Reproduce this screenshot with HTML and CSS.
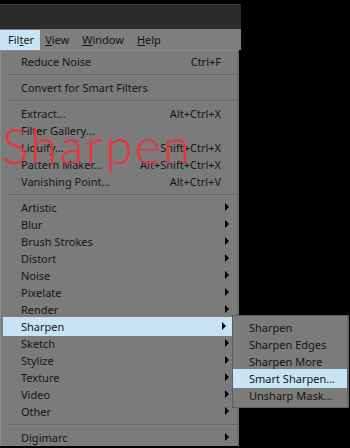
FILE: index.html
```html
<!DOCTYPE html>
<html lang="en">
<head>
    <meta charset="UTF-8">
    <title>Filter menu</title>
    <link rel="stylesheet" href="styles.css">
</head>
<body>
    <div class="app">
        <div class="titlebar"></div>
        <div class="menubar">
            <span class="top active">Fil<u>t</u>er</span>
            <span class="top"><u>V</u>iew</span>
            <span class="top"><u>W</u>indow</span>
            <span class="top"><u>H</u>elp</span>
        </div>
        <ul class="menu">
            <li><span>Reduce Noise</span><em>Ctrl+F</em></li>
            <li class="sep"></li>
            <li><span>Convert for Smart Filters</span></li>
            <li class="sep"></li>
            <li><span>Extract...</span><em>Alt+Ctrl+X</em></li>
            <li><span>Filter Gallery...</span></li>
            <li><span>Liquify...</span><em>Shift+Ctrl+X</em></li>
            <li><span>Pattern Maker...</span><em>Alt+Shift+Ctrl+X</em></li>
            <li><span>Vanishing Point...</span><em>Alt+Ctrl+V</em></li>
            <li class="sep"></li>
            <li class="sub"><span>Artistic</span></li>
            <li class="sub"><span>Blur</span></li>
            <li class="sub"><span>Brush Strokes</span></li>
            <li class="sub"><span>Distort</span></li>
            <li class="sub"><span>Noise</span></li>
            <li class="sub"><span>Pixelate</span></li>
            <li class="sub"><span>Render</span></li>
            <li class="sub hover"><span>Sharpen</span>
                <ul class="submenu">
                    <li><span>Sharpen</span></li>
                    <li><span>Sharpen Edges</span></li>
                    <li><span>Sharpen More</span></li>
                    <li class="hover"><span>Smart Sharpen...</span></li>
                    <li><span>Unsharp Mask...</span></li>
                </ul>
            </li>
            <li class="sub"><span>Sketch</span></li>
            <li class="sub"><span>Stylize</span></li>
            <li class="sub"><span>Texture</span></li>
            <li class="sub"><span>Video</span></li>
            <li class="sub"><span>Other</span></li>
            <li class="sep"></li>
            <li class="sub"><span>Digimarc</span></li>
        </ul>
    </div>
    <div class="label">Sharpen</div>
</body>
</html>
```

FILE: styles.css
```css
body,ul,li{
    margin: 0;
    padding: 0;
    list-style: none;
}
body{
    position: relative;
    width: 350px;
    height: 448px;
    overflow: hidden;
    background: #000;
    font-family: "Noto Sans", "Open Sans", sans-serif;
    font-size: 11px;
    color: #151515;
}
.app{
    width: 241px;
    padding-top: 4px;
}
.titlebar{
    height: 24px;
    background: #2c2c2c;
    border-top: 1px solid #3c3c3c;
}
.menubar{
    display: flex;
    height: 21px;
    align-items: center;
    background: #7e7e7e;
}
.menubar .top{
    padding: 0 6px;
    line-height: 20px;
}
.menubar .top + .top{
    margin-left: 1px;
}
.menubar .active{
    background: #c8e4f4;
    padding-left: 8px;
    padding-right: 6px;
    margin-right: -2px;
}
.menu{
    width: 234px;
    background: #7b7b7b;
    border-left: 1px solid #8c8c8c;
    border-right: 2px solid #6e6e6e;
    border-top: 1px solid #8a8a8a;
    padding: 2px 0 0 2px;
}
.menu li{
    display: flex;
    position: relative;
    justify-content: space-between;
    height: 17px;
    line-height: 17px;
    padding: 0 16px 0 18px;
    white-space: nowrap;
}
.menu li em{
    font-style: normal;
}
.menu .sep{
    height: 0;
    margin: 4px 0 3px 4px;
    padding: 0;
    border-top: 1px solid #666;
    border-bottom: 1px solid #858585;
}
.menu .sub::after{
    content: "";
    position: absolute;
    right: 8px;
    top: 4px;
    border-left: 4px solid #000;
    border-top: 4px solid transparent;
    border-bottom: 4px solid transparent;
}
.menu .hover{
    background: #c8e4f4;
    height: 19px;
    line-height: 19px;
    margin: -1px 3px -1px 0;
    padding-right: 13px;
}
.menu .sub.hover::after{
    top: 5px;
}
.submenu{
    position: absolute;
    left: 229px;
    top: -2px;
    width: 114px;
    padding: 3px 0 3px 0;
    background: #7b7b7b;
    border: 1px solid #5e5e5e;
    border-right: 2px solid #666;
}
.menu .submenu li{
    padding: 0 0 0 16px;
    line-height: 17px;
    height: 17px;
    background: none;
    margin: 0;
}
.menu .submenu .hover{
    background: #c8e4f4;
    height: 19px;
    line-height: 19px;
    margin: -1px 0;
}
.label{
    position: absolute;
    left: 2px;
    top: 121px;
    font-family: Lato, sans-serif;
    font-weight: 300;
    font-size: 49px;
    line-height: 1;
    color: #f0303a;
    letter-spacing: 2.4px;
}
```
